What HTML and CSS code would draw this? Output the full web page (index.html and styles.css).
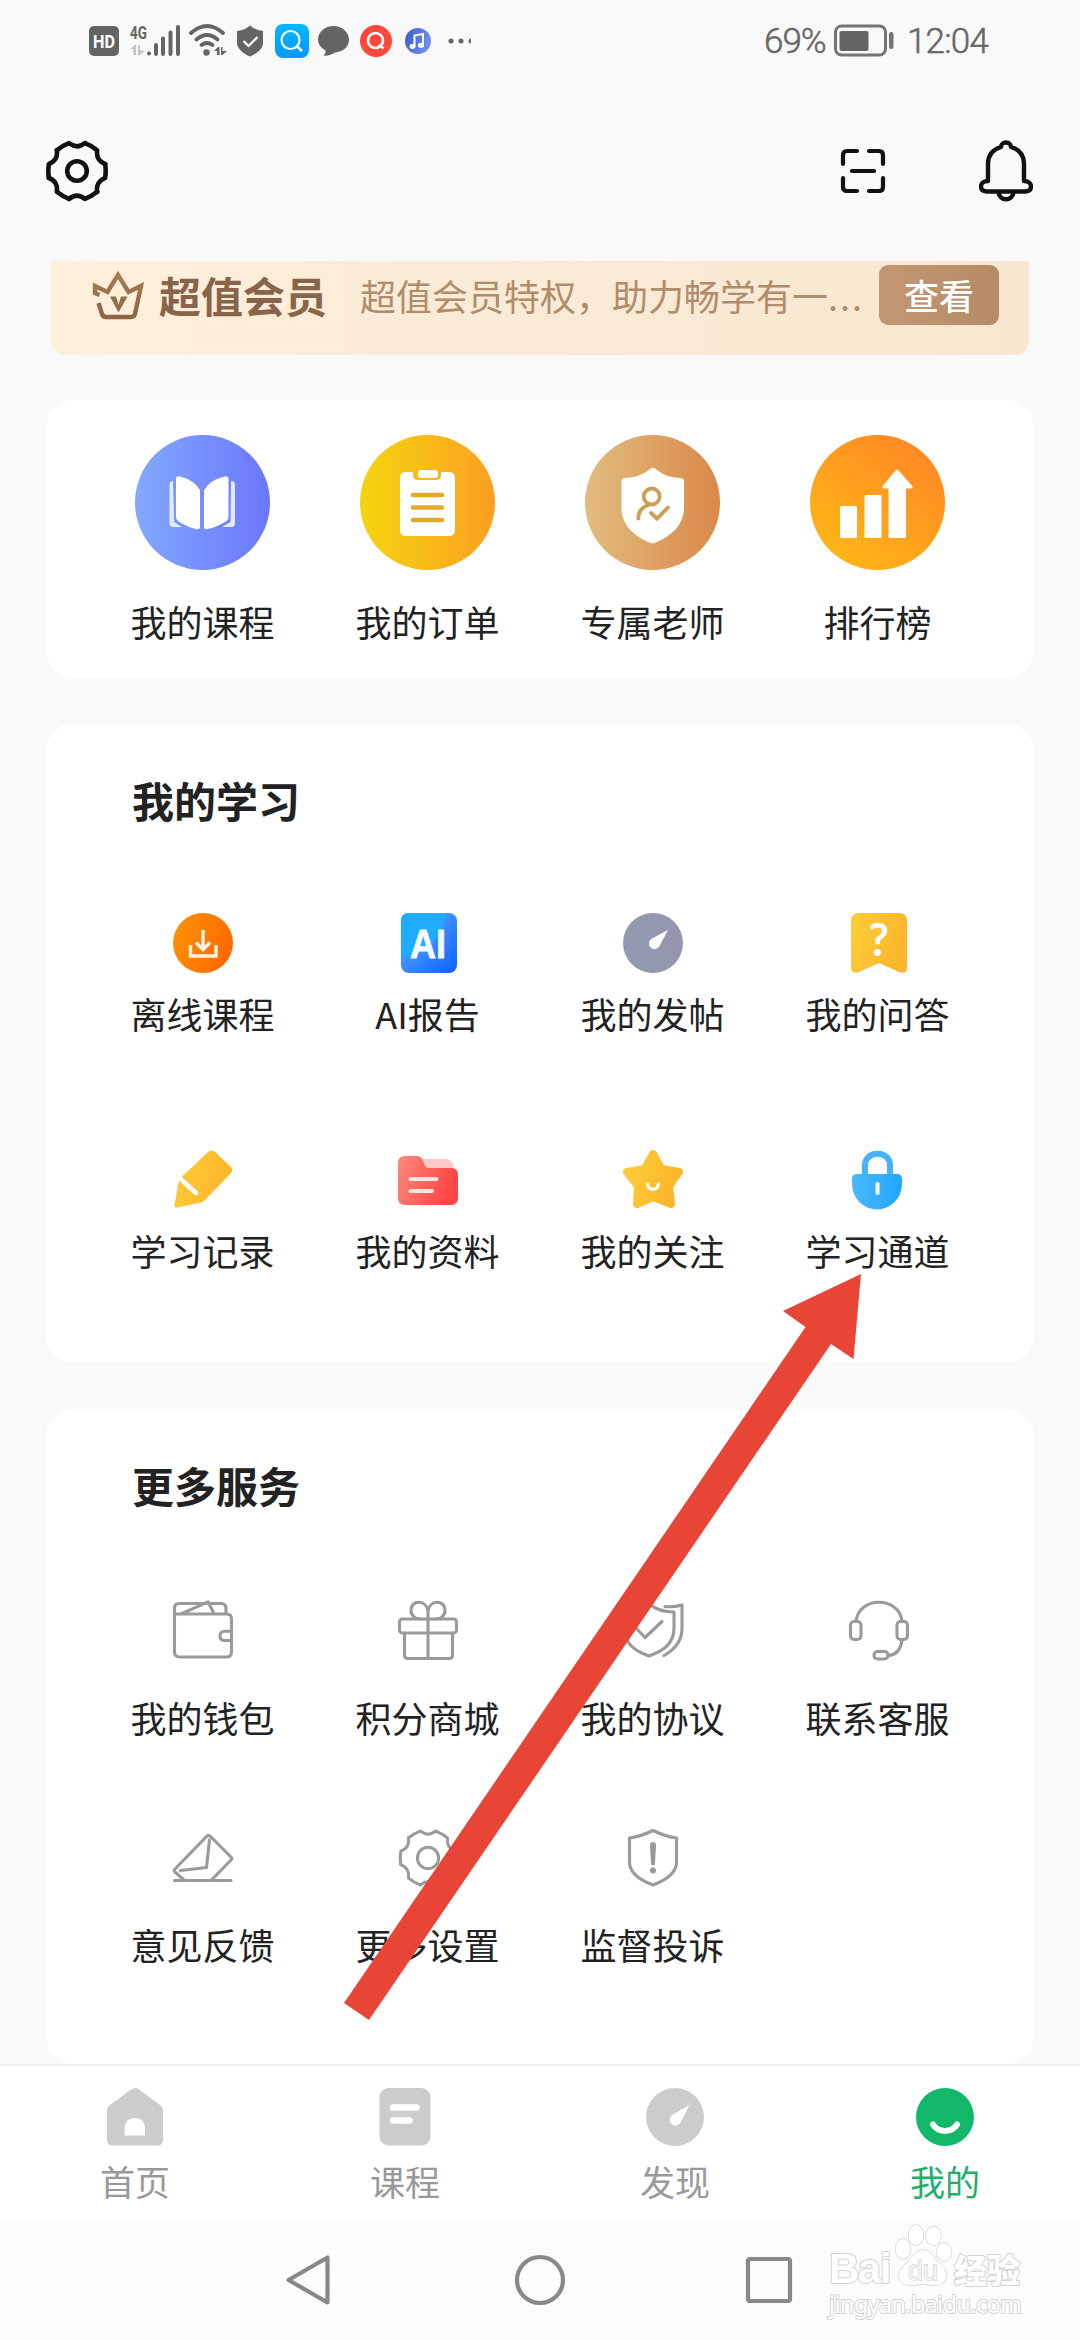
FILE: index.html
```html
<!DOCTYPE html>
<html lang="zh-CN">
<head>
<meta charset="utf-8">
<title>我的</title>
<link rel="stylesheet" href="styles.css">
</head>
<body>
<svg class="defs" width="0" height="0" aria-hidden="true">
  <defs>
    <linearGradient id="gBlue"><stop offset="0" stop-color="#82a9ff"/><stop offset="1" stop-color="#6b76fb"/></linearGradient>
    <linearGradient id="gYellow"><stop offset="0" stop-color="#f4d50f"/><stop offset="1" stop-color="#fb9f22"/></linearGradient>
    <linearGradient id="gTan"><stop offset="0" stop-color="#e2bc80"/><stop offset="1" stop-color="#d98849"/></linearGradient>
    <linearGradient id="gOrange" x1="0.15" y1="0.9" x2="0.75" y2="0.1"><stop offset="0" stop-color="#ffb617"/><stop offset="1" stop-color="#ff8b24"/></linearGradient>
    <linearGradient id="gDown" x2="1" y2="0.3"><stop offset="0" stop-color="#ff9500"/><stop offset="1" stop-color="#ff6a00"/></linearGradient>
    <linearGradient id="gAi" x2="1" y2="1"><stop offset="0.3" stop-color="#4b9bff"/><stop offset="1" stop-color="#0d60ff"/></linearGradient>
    <linearGradient id="gGrey"><stop offset="0" stop-color="#919bb0"/><stop offset="1" stop-color="#9596ae"/></linearGradient>
    <linearGradient id="gGold" x2="1" y2="0.3"><stop offset="0" stop-color="#ffce38"/><stop offset="1" stop-color="#fbb62b"/></linearGradient>
    <linearGradient id="gRed" x2="1" y2="0.3"><stop offset="0" stop-color="#fb8a7c"/><stop offset="1" stop-color="#ff4545"/></linearGradient>
    <linearGradient id="gSky"><stop offset="0" stop-color="#4bb8ff"/><stop offset="1" stop-color="#22a6fd"/></linearGradient>
    <linearGradient id="gApp" x2="0" y2="1"><stop offset="0" stop-color="#00b7ff"/><stop offset="1" stop-color="#0099ff"/></linearGradient>
    <linearGradient id="gMusic" x2="1" y2="0.3"><stop offset="0" stop-color="#3c5bc4"/><stop offset="1" stop-color="#6f8df5"/></linearGradient>
    <linearGradient id="gCrown" x2="0" y2="1"><stop offset="0" stop-color="#a47c58"/><stop offset="1" stop-color="#8b6544"/></linearGradient>
    <g id="cog">
      <path id="cogSide" d="M28.1-7Q29.300 0 28.1 7C21.500 10 19.400 13.600 20.1 20.9"/>
      <use href="#cogSide" transform="rotate(60)"/><use href="#cogSide" transform="rotate(120)"/>
      <use href="#cogSide" transform="rotate(180)"/><use href="#cogSide" transform="rotate(240)"/>
      <use href="#cogSide" transform="rotate(300)"/>
    </g>
  </defs>
</svg>

<div class="phone">
  <div class="status">
    <svg class="s-hd" width="30" height="34"><rect y="2" width="30" height="30" rx="5" fill="#646464"/><text x="15" y="23.5" text-anchor="middle" textLength="22" lengthAdjust="spacingAndGlyphs" class="t-hd">HD</text></svg>
    <svg class="s-signal" width="50" height="34"><text x="0" y="14.500" textLength="17" lengthAdjust="spacingAndGlyphs" class="t-4g">4G</text>
      <path d="M0 25.500l4.500-4.500H6V31H3.500V25.500zM8 21h2v5.500h5L10 31H8z" fill="#c4c4c4"/>
      <g stroke="#646464" stroke-width="4" stroke-linecap="round"><path d="M19 29.500v.1M26 21v9M33 14.500V30M40.500 8.500V30M48 3V30"/></g></svg>
    <svg class="s-wifi" width="38" height="34" fill="none" stroke="#646464" stroke-width="3.800" stroke-linecap="round"><path d="M2 9Q18-5 34 9M7.500 15.500Q18 6.500 28.500 15.500M12.500 21Q18 17 23.500 21"/><circle cx="17.500" cy="28.500" r="3.200" fill="#646464" stroke="none"/><path d="M25 27l4-4h1.500v8H28v-4zM32 23h1.500v4H38l-4.500 4H32z" fill="#646464" stroke="none"/></svg>
    <svg class="s-shield" width="26" height="34"><path d="M13 1.500Q18 6 26 7v12c0 6-7 11-13 13.500C7 30 0 25 0 19V7Q8 6 13 1.500z" fill="#646464"/><path d="M6.500 17l5 5 9-9" fill="none" stroke="#fff" stroke-width="2.200"/></svg>
    <svg class="s-app" width="34" height="34"><rect width="34" height="34" rx="8" fill="url(#gApp)"/><circle cx="15.500" cy="16" r="9" fill="none" stroke="#fff" stroke-width="2.200"/><path d="M21.500 22l5.500 5" stroke="#fff" stroke-width="2.600"/></svg>
    <svg class="s-chat" width="32" height="34"><path d="M15.500 2C24 2 31 8 31 15.500S24.500 28 17 28.500C14 31 9 32 5.500 31.500 7 30 8 28 7.500 26.500 3 24 0 20 0 15.500 0 8 7 2 15.500 2z" fill="#646464"/></svg>
    <svg class="s-red" width="32" height="34"><circle cx="16" cy="17" r="16" fill="#ff473c"/><circle cx="15.500" cy="16.500" r="7.500" fill="none" stroke="#fff" stroke-width="2.600"/><path d="M19 20.500l4.500 4" stroke="#fff" stroke-width="2.600"/></svg>
    <svg class="s-music" width="26" height="34"><circle cx="13" cy="17" r="13" fill="url(#gMusic)"/><path d="M9.500 22V11.500L18 10v11" fill="none" stroke="#fff" stroke-width="2"/><ellipse cx="7.500" cy="22.500" rx="3" ry="2.400" fill="#fff"/><ellipse cx="16" cy="21.500" rx="3" ry="2.400" fill="#fff"/></svg>
    <svg class="s-more" width="23" height="34" fill="#646464"><circle cx="3" cy="17" r="2.500"/><circle cx="13" cy="17" r="2.500"/><circle cx="23" cy="17" r="2.500"/></svg>
    <span class="s-pct">69%</span>
    <svg class="s-bat" width="60" height="34"><rect x="1.500" y="2" width="50" height="29" rx="6" fill="none" stroke="#757575" stroke-width="3"/><rect x="5.500" y="7" width="29" height="20" rx="2" fill="#646464"/><rect x="55" y="8" width="4.500" height="17" rx="2" fill="#757575"/></svg>
    <span class="s-time">12:04</span>
  </div>

  <header class="top">
    <svg width="62" height="62" viewBox="-31 -31 62 62" fill="none" stroke="#111" stroke-width="4.600" stroke-linecap="round" stroke-linejoin="round"><use href="#cog"/><circle r="9.800"/></svg>
    <svg class="scan" width="46" height="46" viewBox="0 0 46 46" fill="none" stroke="#111" stroke-width="4.200" stroke-linecap="round"><path d="M3 16V7q0-4 4-4h10M29 3h10q4 0 4 4v9M43 30v9q0 4-4 4H29M17 43H7q-4 0-4-4v-9M12 23h22"/></svg>
    <svg class="bell" width="54" height="62" viewBox="0 0 54 62" fill="none" stroke="#111" stroke-width="4.400" stroke-linejoin="round"><path d="M9 41V24C9 14 15 9 22 7c0-6 10-6 10 0C39 9 45 14 45 24V41c4.500 0 7 2.500 7 5.500S50 51.500 46 51.500H8c-4 0-6-2-6-5S4.500 41 9 41z"/><path d="M19.500 52.500c1 9 14 9 15 0"/></svg>
  </header>

  <section class="vip">
    <svg width="52" height="50" viewBox="0 0 52 50" fill="none" stroke="url(#gCrown)" stroke-width="4.400"><path d="M7.500 25L3 23V16l12.500 6L26 5l10.500 17 12.500-6-6 28q-.8 3-4 3H14q-3 0-4-3L6.500 33"/><path d="M18 26.500h6l2.500 8 2.500-8h6.500l-9 16z" fill="#946d4b" stroke="none"/></svg>
    <strong class="vip-name">超值会员</strong>
    <span class="vip-desc">超值会员特权，助力畅学有一<span class="dots">...</span></span>
    <a class="vip-btn">查看</a>
  </section>

  <section class="card card-main">
    <div class="grid">
      <div class="item"><svg class="big" viewBox="0 0 135 135"><circle cx="67.500" cy="67.500" r="67.500" fill="url(#gBlue)"/><g fill="#e6eaff"><path d="M38 46q-3.500 0-3.500 4V88q0 4 4 4h8.500L39 87z"/><path d="M96 46q4 0 4 4V88q0 4-4 4h-9l8.500-5z"/></g><g fill="#fff"><path d="M41 44q0-3.500 4-2.500Q59 45 65 55V91q0 4-4 3Q50 91 43 86q-2-1.500-2-4z"/><path d="M93.500 44q0-3.500-4-2.500Q75 45 69 55V91q0 4 4 3 11-3 18.500-8 2-1.500 2-4z"/></g></svg><span>我的课程</span></div>
      <div class="item"><svg class="big" viewBox="0 0 135 135"><circle cx="67.500" cy="67.500" r="67.500" fill="url(#gYellow)"/><path d="M46 37h7v3q0 5 5 5H76q5 0 5-5V37h8q6 0 6 6V95q0 6-6 6H46q-6 0-6-6V43q0-6 6-6z" fill="#fff"/><rect x="58" y="35" width="20" height="8" rx="3" fill="#fff"/><path d="M53 60H82M53 72.500H82M53 85H82" stroke="#e5a92a" stroke-width="4.600" stroke-linecap="round"/></svg><span>我的订单</span></div>
      <div class="item"><svg class="big" viewBox="0 0 135 135"><circle cx="67.500" cy="67.500" r="67.500" fill="url(#gTan)"/><path d="M64 35q4-4.500 8 0Q80 42 95 43q4 0 4 3V73c0 18-15 30-31.500 35.500C51 103 36.500 91 36.500 73V46q0-3 4-3Q55 42 64 35z" fill="#fff"/><g fill="none" stroke="#c9a257" stroke-width="3.800" stroke-linecap="round"><circle cx="66.700" cy="61.500" r="8"/><path d="M53.300 83.500q0-10 10-13.500M66 78l6 5.500 11-11"/></g></svg><span>专属老师</span></div>
      <div class="item"><svg class="big" viewBox="0 0 135 135"><circle cx="67.500" cy="67.500" r="67.500" fill="url(#gOrange)"/><g fill="#fff" stroke="#fff" stroke-width="3" stroke-linejoin="round"><path d="M31.500 72.500H45.500V101.500H31.500zM56 61.500H70V101.500H56zM80 52H74L87 36 101 52H94.500V101.500H80z"/></g></svg><span>排行榜</span></div>
    </div>
  </section>

  <section class="card card-study">
    <h2>我的学习</h2>
    <div class="grid">
      <div class="item"><svg viewBox="0 0 60 60"><circle cx="30" cy="30" r="30" fill="url(#gDown)"/><path d="M30 17V36M23 29.500l7 7 7-7M17.500 32V43H43V32" fill="none" stroke="#fff3e4" stroke-width="3.400"/></svg><span>离线课程</span></div>
      <div class="item"><svg viewBox="0 0 60 60"><rect x="3" width="56" height="60" rx="8" fill="url(#gAi)"/><path d="M3 46V8q0-8 8-8H48Q46 34 3 46z" fill="#1fabff"/><text x="12" y="45" textLength="36" lengthAdjust="spacingAndGlyphs" class="t-ai">AI</text></svg><span>AI报告</span></div>
      <div class="item"><svg viewBox="0 0 60 60"><circle cx="30" cy="30" r="30" fill="url(#gGrey)"/><path d="M45 17L36.500 33A5.600 5.600 0 1 1 29 25.500z" fill="#fff"/></svg><span>我的发帖</span></div>
      <div class="item"><svg viewBox="0 0 60 60"><path d="M11 0H51q8 0 8 8V54q0 8-8 5L31 50 11 59q-8 3-8-5V8q0-8 8-8z" fill="url(#gGold)"/><text x="30.500" y="43" text-anchor="middle" class="t-q">?</text></svg><span>我的问答</span></div>
      <div class="item"><svg viewBox="0 0 60 60"><path d="M35.500 1.500q3-2 6 0L58 17q2.500 3 0 6L33 49q-2 2.500-5 3.500L4 57.500q-3 .5-2.500-2.500L5.500 32q.5-2 2-4z" fill="url(#gGold)"/><path d="M6.500 28L23 43" stroke="#fff" stroke-width="4.600" stroke-linecap="round"/></svg><span>学习记录</span></div>
      <div class="item"><svg viewBox="0 0 60 60"><path d="M22 9H48q7 0 8 10H26z" fill="#ffc9c5"/><path d="M7 6H19q5 0 7 7 1 5 5 5H53q7 0 7 7V48q0 7-7 7H7q-7 0-7-7V13q0-7 7-7z" fill="url(#gRed)"/><path d="M12.500 29H38.500M12.500 41H34" stroke="#ffe3e0" stroke-width="4" stroke-linecap="round"/></svg><span>我的资料</span></div>
      <div class="item"><svg viewBox="0 0 60 60"><path d="M30 4L38.500 19 56 22 46 36 48 54 30 47 14 54 15 36 4 22 21.500 19z" fill="url(#gGold)" stroke="url(#gGold)" stroke-width="8" stroke-linejoin="round"/><path d="M24.500 34c1 7 10 7 11 0" fill="none" stroke="#fff" stroke-width="3.200" stroke-linecap="round"/></svg><span>我的关注</span></div>
      <div class="item"><svg viewBox="0 0 60 60"><path d="M17 25V15C17 0 42 0 42 15V25" fill="none" stroke="#43b3ff" stroke-width="6"/><path d="M9 24H49q5 0 5 5v5A25 25.500 0 0 1 4 34V29q0-5 5-5z" fill="url(#gSky)"/><path d="M29.500 34v9" stroke="#fff" stroke-width="4" stroke-linecap="round"/></svg><span>学习通道</span></div>
    </div>
  </section>

  <section class="card card-service">
    <h2>更多服务</h2>
    <div class="grid line-icons">
      <div class="item"><svg viewBox="0 0 60 60"><path d="M1.500 51V7q0-4.500 4.500-4.500H48q5 0 5 5V13M9 12.500L35 .8 41 12.500M1.500 13H53.500q5 0 5 5V51q0 5-5 5H6.500q-5 0-5-5M58.500 30.300H52q-5 0-5 4.600t5 4.600h6.500"/></svg><span>我的钱包</span></div>
      <div class="item"><svg viewBox="0 0 60 60"><rect x="1.500" y="18" width="57" height="14" rx="3"/><path d="M6.500 32V54q0 3.500 3.500 3.500H51q3.500 0 3.500-3.500V32M30 57V10M30 10C28-2 13-1 13 9c0 7 6 9 9 9M30 10C32-2 47-1 47 9c0 7-6 9-9 9"/></svg><span>积分商城</span></div>
      <div class="item"><svg viewBox="0 0 60 60"><path d="M26 3Q36 11 51 11V27C51 43 40 50 26 55 12 50 1.500 43 1.500 27V11Q16 11 26 3zM42 5.500Q50 6.500 59 4V27C59 41 51 49 41 54.500M13 27l9 9.500L39 20.500"/></svg><span>我的协议</span></div>
      <div class="item"><svg viewBox="0 0 60 60"><rect x="2.500" y="20.500" width="10.500" height="18" rx="3.500"/><rect x="49" y="20.500" width="10.500" height="18" rx="3.500"/><path d="M8 20C11-5 51-5 54 20M54 39C53 47 49 54 40 54.500"/><rect x="26" y="50.500" width="14" height="7.500" rx="3.500"/></svg><span>联系客服</span></div>
      <div class="item"><svg viewBox="0 0 60 60"><path d="M11.500 52.500L2 44q-1.500-1.500 0-3L33.500 8.500q2-2 4 0L58 29q1.500 1.500 0 3L38 52.500M36.500 12L33.500 39.500 7.500 42.500M1.500 52.500H58"/></svg><span>意见反馈</span></div>
      <div class="item"><svg viewBox="-31 -31 62 62"><use href="#cog"/><circle r="11"/></svg><span>更多设置</span></div>
      <div class="item"><svg viewBox="0 0 60 60"><path d="M30 2.500Q41 8 53.500 10V34C53.500 46 42 52.500 30 57 18 52.500 6.500 46 6.500 34V10Q19 8 30 2.500z"/><path d="M27 17.500q0-3.500 3-3.500t3 3.500L31.800 37H28.200z" class="solid"/><circle cx="30" cy="42.500" r="3" class="solid"/></svg><span>监督投诉</span></div>
    </div>
  </section>

  <nav class="tabs">
    <div class="tab"><svg viewBox="0 0 60 60" fill="#ccc"><path fill-rule="evenodd" d="M26 2.500q4-3 8 0L55 18q3 2 3 6V53q0 5.500-5.500 5.500h-45Q2 58.500 2 53V24q0-4 3-6zM19.500 48.500H40V40Q39 31 30 31T19.500 40z"/></svg><span>首页</span></div>
    <div class="tab"><svg viewBox="0 0 60 60"><rect x="4.500" y="1" width="51" height="57.500" rx="9" fill="#ccc"/><path d="M18 20.500H41.500M18 33.500H34.500" stroke="#fff" stroke-width="6.500" stroke-linecap="round"/></svg><span>课程</span></div>
    <div class="tab"><svg viewBox="0 0 60 60"><circle cx="30" cy="30" r="29" fill="#ccc"/><path d="M44.500 18L35.800 35A5.800 5.800 0 1 1 28 27.500z" fill="#fff"/></svg><span>发现</span></div>
    <div class="tab active"><svg viewBox="0 0 60 60"><circle cx="30" cy="30" r="29" fill="#12b76a"/><path d="M18 37.500C23 46 37 46 42 37.500" fill="none" stroke="#fff" stroke-width="6" stroke-linecap="round"/></svg><span>我的</span></div>
  </nav>

  <div class="sysnav">
    <svg viewBox="0 0 52 52"><path d="M42.500 3.500V48.500L3.500 26z"/></svg>
    <svg viewBox="0 0 52 52"><circle cx="26" cy="26" r="23"/></svg>
    <svg viewBox="0 0 52 52"><rect x="5" y="5" width="42" height="42" rx="2"/></svg>
    <div class="mark">
      <div class="mark-row">
        <b class="mark-bai">Bai</b>
        <svg width="60" height="64" viewBox="0 0 60 64" fill="#fff" stroke="#d2d2d2" stroke-width="1.300"><ellipse cx="9" cy="25" rx="7.500" ry="10"/><ellipse cx="22" cy="11" rx="7.500" ry="10"/><ellipse cx="39.500" cy="12" rx="7.500" ry="9.500"/><ellipse cx="50" cy="28" rx="7.500" ry="9"/><path d="M29 26c8 0 10 7 15 12 5 4 9 8 8 15s-8 9-14 8c-6-1-12-1-18 0S6 60 5 53s5-11 9-15c5-5 7-12 15-12z"/><text x="29" y="56" text-anchor="middle" class="t-du">du</text></svg>
        <b class="mark-cn">经验</b>
      </div>
      <span class="mark-url">jingyan.baidu.com</span>
    </div>
  </div>

  <svg class="arrow" width="520" height="750" viewBox="342 1272 520 750"><path d="M861 1274L783 1311 805.500 1327 344 2003 369 2020 831 1344 853.500 1359z" fill="#e94536"/></svg>
</div>
</body>
</html>
```
FILE: styles.css
```css
* { box-sizing: border-box; }
body {
  margin: 0;
  background: #f9f9f9;
  color: #222;
  font-family: "Noto Sans CJK SC", sans-serif;
}
svg { display: block; flex: none; }
.defs { position: absolute; }
.phone {
  position: relative;
  display: flex;
  flex-direction: column;
  width: 1080px;
  height: 2340px;
  overflow: hidden;
}

/* status bar */
.status {
  display: flex;
  align-items: center;
  height: 82px;
  padding-left: 89px;
  color: #666;
  font: 400 35px/40px Roboto, sans-serif;
}
.s-signal { margin-left: 11px; overflow: visible; }
.s-wifi { margin-left: 9px; }
.s-shield { margin-left: 10px; }
.s-app { margin-left: 12px; }
.s-chat { margin-left: 9px; }
.s-red { margin-left: 10px; }
.s-music { margin-left: 13px; }
.s-more { margin-left: 17px; }
.s-pct { width: 70px; margin-left: 293px; letter-spacing: -1px; white-space: nowrap; }
.s-time { margin-left: 13px; letter-spacing: -0.8px; }
.s-pct, .s-time { padding-top: 2px; font-weight: 300; -webkit-text-stroke: 0.5px #666; }
.t-hd { font: 700 19px Roboto, sans-serif; fill: #fff; }
.t-4g { font: 700 18px Roboto, sans-serif; fill: #646464; }
.t-ai { font: 700 40px "Liberation Sans", sans-serif; fill: #f2faff; stroke: #f2faff; stroke-width: 0.8px; }
.t-q { font: 700 45px Lato, sans-serif; fill: #fff; }
.t-du { font: 400 27px "Liberation Sans", sans-serif; fill: #f2f2f2; }

/* page header */
.top {
  display: flex;
  align-items: center;
  height: 179px;
  padding: 0 47px 1px 46px;
}
.scan { margin-left: auto; }
.bell { margin-left: 93px; }

/* membership banner */
.vip {
  display: flex;
  align-items: center;
  height: 94px;
  margin: 0 51px 45px;
  padding: 0 30px 27px 41px;
  border-radius: 0 0 14px 14px;
  background: linear-gradient(90deg, #fef0da, #faebd7 40%, #f8e7d0);
  white-space: nowrap;
}
.vip-name { margin-left: 15px; color: #88644a; font-size: 42px; line-height: 60px; }
.vip-desc { margin-left: 33px; color: #b18c6b; font-size: 36px; line-height: 50px; }
.dots { letter-spacing: 2px; }
.vip-btn {
  width: 120px;
  height: 60px;
  margin-left: auto;
  border-radius: 9px;
  background: linear-gradient(90deg, #c39772, #b58b68);
  color: #fff;
  font-size: 35px;
  font-weight: 500;
  line-height: 60px;
  text-align: center;
}

/* cards */
.card {
  flex: none;
  margin: 0 46px 46px;
  padding: 0 44px;
  border-radius: 27px;
  background: #fff;
}
.card-main { height: 278px; padding-top: 35px; }
.card-study { height: 639px; }
.card-service { height: 655px; margin-bottom: 0; }
h2 {
  margin: 0;
  padding: 46px 0 0 42px;
  font-size: 42px;
  font-weight: 700;
  line-height: 60px;
}
.grid { display: grid; grid-template-columns: repeat(4, 225px); }
.card-study .grid { grid-auto-rows: 237px; padding-top: 83px; }
.card-service .grid { grid-auto-rows: 227px; padding-top: 86px; }
.item { display: flex; flex-direction: column; align-items: center; }
.item svg { width: 60px; height: 60px; }
.item .big { width: 135px; height: 135px; }
.item span { margin-top: 15px; font-size: 36px; line-height: 50px; }
.item .big + span { margin-top: 26px; }
.line-icons .item span { margin-top: 31px; }
.line-icons svg {
  overflow: visible;
  fill: none;
  stroke: #9a9a9a;
  stroke-width: 3.1;
  stroke-linecap: round;
  stroke-linejoin: round;
}
.line-icons .solid { fill: #999; stroke: none; }

/* tab bar */
.tabs {
  display: grid;
  grid-template-columns: repeat(4, 1fr);
  flex: none;
  height: 156px;
  border-top: 2px solid #eee;
  background: #fff;
}
.tab {
  display: flex;
  flex-direction: column;
  align-items: center;
  padding-top: 21px;
  color: #999;
  font-size: 35px;
  line-height: 50px;
}
.tab svg { width: 60px; height: 60px; margin-bottom: 9px; }
.active { color: #1fae6b; }

/* system navigation */
.sysnav {
  position: relative;
  display: flex;
  justify-content: center;
  gap: 177px;
  height: 120px;
  padding-top: 34px;
  background: #fcfcfc;
}
.sysnav > svg {
  width: 52px;
  height: 52px;
  fill: none;
  stroke: #888;
  stroke-width: 4.2;
  stroke-linejoin: round;
}

/* watermark over the navigation strip */
.mark {
  position: absolute;
  left: 829px;
  top: 4px;
  width: 196px;
  color: #fff;
  -webkit-text-stroke: 2px #d4d4d4;
  paint-order: stroke;
}
.mark-row { display: flex; height: 64px; align-items: flex-end; }
.mark-bai { width: 65px; font: 700 42px/38px "Liberation Sans", sans-serif; letter-spacing: -1.5px; }
.mark-cn { font-size: 33px; font-weight: 900; line-height: 38px; }
.mark-url { display: block; margin-top: 2px; font: 400 23px/28px "Noto Sans", sans-serif; letter-spacing: -0.4px; white-space: nowrap; }

/* pointer laid over the cards */
.arrow { position: absolute; left: 342px; top: 1272px; }
```
